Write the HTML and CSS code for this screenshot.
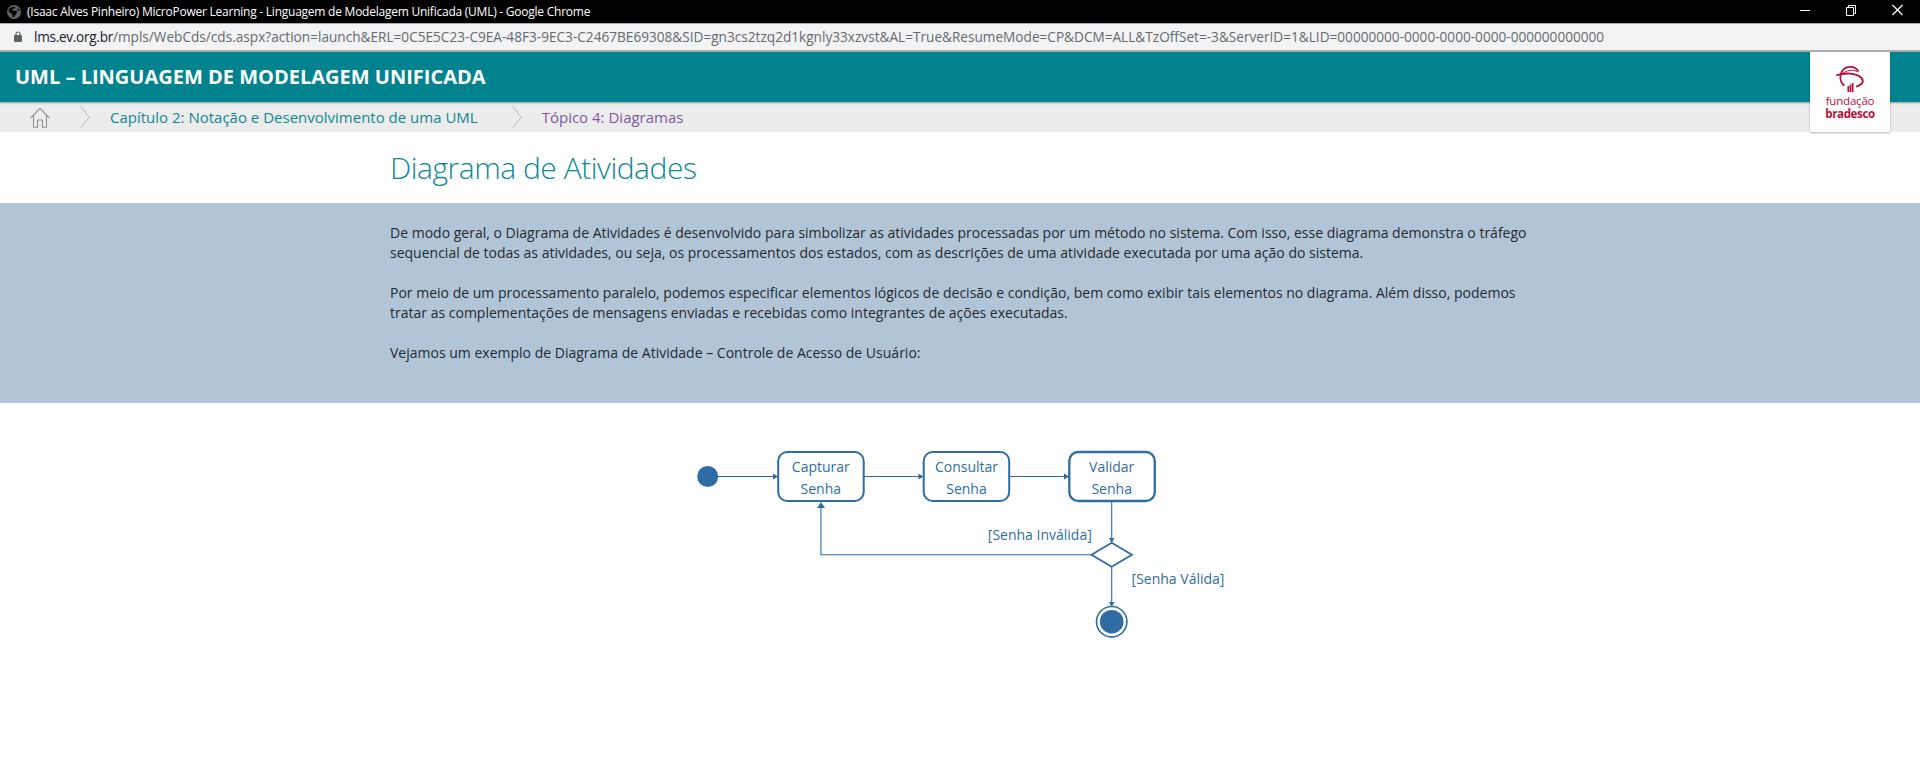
FILE: index.html
```html
<!DOCTYPE html>
<html lang="pt-BR">
<head>
<meta charset="utf-8">
<title>MicroPower Learning - Linguagem de Modelagem Unificada (UML)</title>
<link rel="stylesheet" href="styles.css">
</head>
<body>
<div class="titlebar">
  <svg class="globe" width="14" height="14" viewBox="0 0 14 14"><circle cx="7" cy="7" r="7" fill="#5f6368"/><path d="M2 3.500 5.500 2l3-.5-.8 1.700-2.500 1.200.8 1.300h3.200l1 1.600-1.200 2-2 2.800-1.500-.2v-2L4 8.200 1.500 6.500zM10.500 3l1.700 1.800-.2 1.500-1.800-1z" fill="#050505"/></svg>
  <span class="window-title">(Isaac Alves Pinheiro) MicroPower Learning - Linguagem de Modelagem Unificada (UML) - Google Chrome</span>
  <div class="controls">
    <svg width="10" height="12" viewBox="0 0 10 12"><path d="M0 6.500h10" stroke="#fff"/></svg>
    <svg width="10" height="12" viewBox="0 0 10 12"><path d="M.5 3.500h7v8h-7zM2.500 3.500v-2h7v8h-2" fill="none" stroke="#fff"/></svg>
    <svg width="11" height="12" viewBox="0 0 11 12"><path d="M.5 1 10.500 11M10.500 1 .5 11" stroke="#fff" stroke-width="1.200"/></svg>
  </div>
</div>
<div class="urlbar">
  <svg class="lock" width="8" height="12" viewBox="0 0 8 12"><path d="M2 5V3a2 2 0 0 1 4 0v2" fill="none" stroke="#5f6368" stroke-width="1.200"/><rect y="4" width="8" height="7" rx="1" fill="#5f6368"/></svg>
  <span class="url"><span class="host">lms.ev.org.br</span>/mpls/WebCds/cds.aspx?action=launch&amp;ERL=0C5E5C23-C9EA-48F3-9EC3-C2467BE69308&amp;SID=gn3cs2tzq2d1kgnly33xzvst&amp;AL=True&amp;ResumeMode=CP&amp;DCM=ALL&amp;TzOffSet=-3&amp;ServerID=1&amp;LID=00000000-0000-0000-0000-000000000000</span>
</div>
<header class="course"><span class="course-name">UML – LINGUAGEM DE MODELAGEM UNIFICADA</span>
  <div class="logo">
    <svg width="28" height="28" viewBox="0 0 28 28" fill="none" stroke="#b1123a"><path d="M22.500 6.500C19 .8 12 1 8.500 3.500 3 8 3 17 8.500 20.500" stroke-width="1.700"/><path d="M.3 10.300C9 7.500 20 8 25 12.500c4.500 4.500-.5 8-5 9.200" stroke-width="1.900"/><path d="M6 9.200C10 5 17 4 21.500 6.800" stroke-width="1"/><path d="M12.300 27v-6M14.500 27v-7.500M16.700 27v-9" stroke-width="1.700"/></svg>
    <span class="logo-top">fundação</span>
    <span class="logo-bottom">bradesco</span>
  </div>
</header>
<nav class="crumbs">
  <svg class="home" width="20" height="21" viewBox="0 0 20 21"><path d="M.7 11 10 1.200l9.300 9.800M3.500 9v11.300h4V13h5v7.300h4V9" fill="none" stroke="#929292" stroke-width="1.100"/></svg>
  <svg class="sep" width="10" height="22" viewBox="0 0 10 22"><path d="M.7.5 9.200 11 .7 21.500" fill="none" stroke="#b5b5b5"/></svg>
  <span class="chapter">Capítulo 2: Notação e Desenvolvimento de uma UML</span>
  <svg class="sep sep-second" width="10" height="22" viewBox="0 0 10 22"><path d="M.7.5 9.200 11 .7 21.500" fill="none" stroke="#b5b5b5"/></svg>
  <span class="topic">Tópico 4: Diagramas</span>
</nav>
<main>
  <h1 class="heading">Diagrama de Atividades</h1>
  <section class="intro">
    <p>De modo geral, o Diagrama de Atividades é desenvolvido para simbolizar as atividades processadas por um método no sistema. Com isso, esse diagrama demonstra o tráfego<br>sequencial de todas as atividades, ou seja, os processamentos dos estados, com as descrições de uma atividade executada por uma ação do sistema.</p>
    <p>Por meio de um processamento paralelo, podemos especificar elementos lógicos de decisão e condição, bem como exibir tais elementos no diagrama. Além disso, podemos<br>tratar as complementações de mensagens enviadas e recebidas como integrantes de ações executadas.</p>
    <p>Vejamos um exemplo de Diagrama de Atividade – Controle de Acesso de Usuário:</p>
  </section>
  <svg class="diagram" width="540" height="200" viewBox="690 445 540 200">
    <g fill="none" stroke="#2e6da4" stroke-width="1">
      <path d="M717 476.500h60M864 476.500h58M1009 476.500h60"/>
      <path d="M1111.700 501v40M1111.700 567v37M1091 554.700H820.900V506" stroke-width="1.100"/>
    </g>
    <g fill="#2e6da4">
      <circle cx="707.700" cy="476.500" r="10.500"/>
      <path d="M773 473.500v6l5-3zM918.500 473.500v6l5-3zM1064 473.500v6l5-3zM817 508h8l-4-6zM1108.900 538h5.600l-2.800 5zM1108.900 602h5.600l-2.800 5z"/>
      <circle cx="1111.700" cy="621.700" r="11.800"/>
    </g>
    <g fill="#fff" stroke="#2e6da4" stroke-width="2">
      <rect x="778.200" y="452" width="85.500" height="49" rx="9"/>
      <rect x="923.700" y="452" width="85.500" height="49" rx="9"/>
      <rect x="1069.300" y="452" width="85.500" height="49" rx="9" stroke-width="2.300"/>
      <path d="M1091.500 554.700l20.200-12 20.200 12-20.200 12z" stroke-width="1.800"/>
      <circle cx="1111.700" cy="621.700" r="15.200" fill="none" stroke-width="1.600"/>
    </g>
    <g class="labels">
      <text x="820.800" y="471.500">Capturar</text><text x="820.800" y="494.300">Senha</text>
      <text x="966.500" y="471.500">Consultar</text><text x="966.500" y="494.300">Senha</text>
      <text x="1111.700" y="471.500">Validar</text><text x="1111.700" y="494.300">Senha</text>
      <text x="1039.800" y="539.500">[Senha Inválida]</text><text x="1178" y="583.500">[Senha Válida]</text>
    </g>
  </svg>
</main>
</body>
</html>
```
FILE: styles.css
```css
body { margin: 0; height: 759px; overflow: hidden; background: #fff; font-family: "Open Sans", "Liberation Sans", sans-serif; white-space: nowrap; }
svg { display: block; flex: none; }
.titlebar { display: flex; align-items: center; box-sizing: border-box; height: 23px; padding: 0 17px 0 7px; background: #000; color: #fff; }
.window-title { margin-left: 6px; font-size: 12px; line-height: 23px; letter-spacing: -0.24px; }
.controls { display: flex; gap: 36px; margin: -3px 0 0 auto; }
.urlbar { display: flex; align-items: center; box-sizing: border-box; height: 29px; padding-left: 14px; background: #f1f3f4; border-top: 1px solid #aaa; border-bottom: 2px solid #b0b0b0; }
.url { margin-left: 12px; font-size: 13.6px; line-height: 26px; letter-spacing: 0.017px; color: #666a6e; }
.host { color: #202124; letter-spacing: -0.28px; }
.course { position: relative; z-index: 1; display: flex; justify-content: space-between; height: 50px; padding: 0 30px 0 15px; background: #00838f; box-shadow: 0 1px 2px rgba(0, 0, 0, .35); color: #fff; }
.course-name { font-size: 20px; font-weight: 700; line-height: 49px; }
.logo { display: flex; flex-direction: column; align-items: center; box-sizing: border-box; width: 80px; height: 80px; padding-top: 13px; background: #fff; box-shadow: 0 1px 2px rgba(0, 0, 0, .3); color: #b1123a; font-family: "Open Sans", sans-serif; }
.logo-top { font-size: 11.5px; line-height: 12px; margin-top: 2px; letter-spacing: -0.2px; }
.logo-bottom { font-size: 11.5px; line-height: 12px; margin-top: 1px; font-weight: 700; letter-spacing: -0.35px; }
.crumbs { display: flex; align-items: center; height: 30px; padding-left: 30px; background: #ececec; font-size: 15px; line-height: 30px; }
.sep { margin-left: 30px; }
.chapter { margin-left: 20px; color: #0e8993; }
.sep-second { margin-left: 34px; }
.topic { margin-left: 20px; color: #8159a0; }
.heading { margin: 0; padding-left: 390px; height: 71px; font-size: 30px; line-height: 72px; font-weight: 300; letter-spacing: -0.47px; color: #0e8993; }
.intro { box-sizing: border-box; height: 200px; padding: 20px 0 0 390px; background: #b2c5d7; color: #222a31; font-size: 14px; line-height: 20px; letter-spacing: 0.005px; }
.intro p { margin: 0 0 20px; }
.diagram { margin: 42px 0 0 690px; }
.labels { font-size: 14px; fill: #2e6da4; text-anchor: middle; }
```
